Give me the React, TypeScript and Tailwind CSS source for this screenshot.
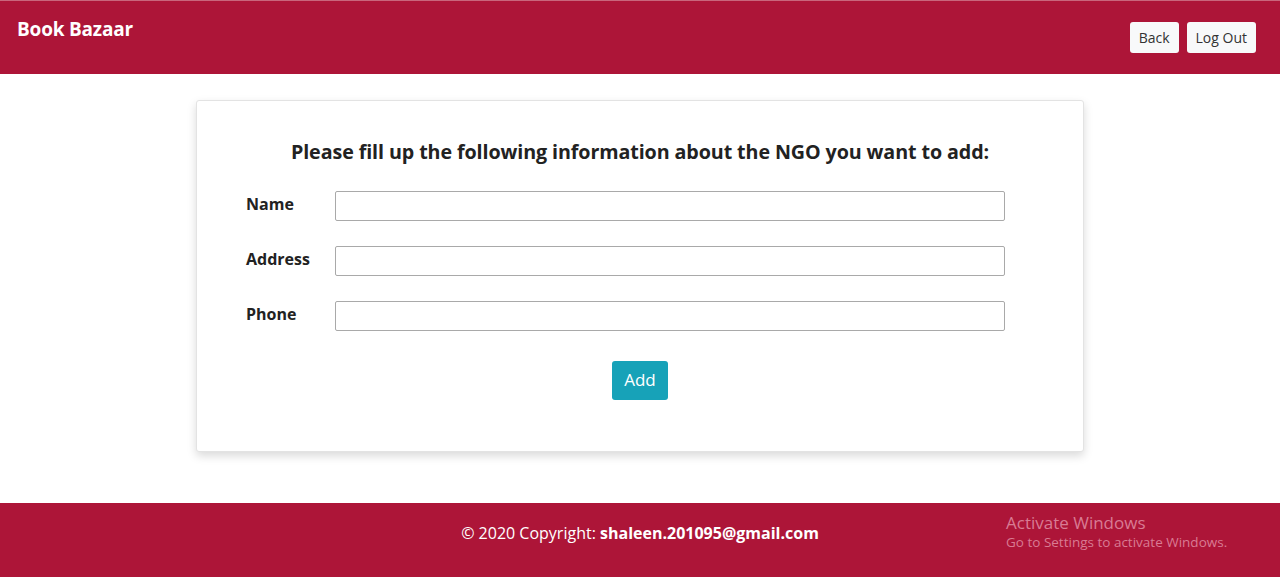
export default function App() {
  const font = { fontFamily: '"Open Sans", "Noto Sans", sans-serif' };
  return (
    <div className="w-[1280px] h-[580px] bg-white flex flex-col" style={font}>
      <header className="h-[74px] bg-[#ad1538] border-t border-[#c9667c] flex items-start justify-between px-[17px]">
        <div className="text-white font-bold text-[19px] mt-[14px] tracking-[-0.2px]">Book Bazaar</div>
        <div className="flex gap-[8px] mt-[21px] mr-[7px]">
          <button className="h-[31px] px-[9px] rounded-[3px] bg-[#f8f9fa] text-[#333] text-[14px]">Back</button>
          <button className="h-[31px] px-[9px] rounded-[3px] bg-[#f8f9fa] text-[#333] text-[14px]">Log Out</button>
        </div>
      </header>
      <main className="flex-1 flex justify-center pt-[26px]">
        <div className="w-[888px] h-[352px] bg-white border border-[#e3e3e3] rounded-[3px] shadow-[0_4px_10px_rgba(0,0,0,0.15)] flex flex-col items-center">
          <h2 className="mt-[36px] text-[19.7px] font-bold text-[#222] tracking-[-0.1px]">
            Please fill up the following information about the NGO you want to add:
          </h2>
          <div className="w-full pl-[49px] mt-[24px] flex flex-col gap-[25px]">
            {["Name", "Address", "Phone"].map((l) => (
              <div key={l} className="flex items-center">
                <label className="w-[89px] text-[16px] font-bold text-[#222] -mt-[4px]">{l}</label>
                <input className="w-[670px] h-[30px] border border-[#a9a9a9] rounded-[2px] bg-white" />
              </div>
            ))}
          </div>
          <button className="mt-[30px] w-[56px] h-[39px] rounded-[3px] bg-[#17a2b8] text-white text-[17px]">Add</button>
        </div>
      </main>
      <footer className="h-[74px] mb-[3px] bg-[#ad1538] relative flex items-center justify-center">
        <div className="text-white text-[16px] -mt-[14px]">
          © 2020 Copyright: <span className="font-bold">shaleen.201095@gmail.com</span>
        </div>
        <div className="absolute left-[1006px] top-[9px] text-[#d97b93] leading-tight">
          <div className="text-[17px]">Activate Windows</div>
          <div className="text-[13.5px] mt-[1px]">Go to Settings to activate Windows.</div>
        </div>
      </footer>
    </div>
  );
}
